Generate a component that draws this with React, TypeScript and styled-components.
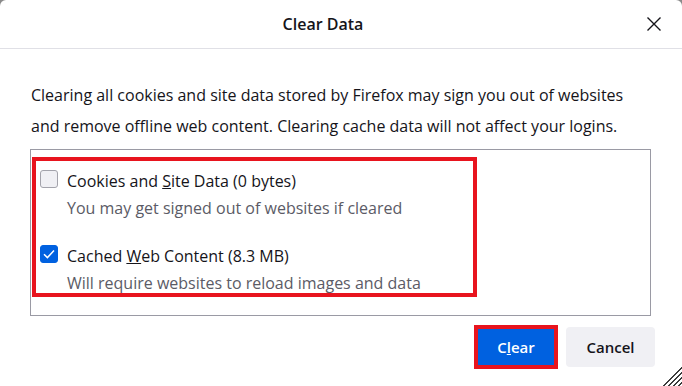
import { createGlobalStyle, styled } from 'styled-components';

const GlobalStyle = createGlobalStyle`
  html, body {
    margin: 0;
    padding: 0;
    background: #8a8a8a;
  }
  body {
    font-family: "Open Sans", "Noto Sans", sans-serif;
    color: #15141a;
  }
`;

function CloseIcon() {
  return (
    <svg width="16" height="16" viewBox="0 0 16 16" aria-hidden="true">
      <path d="M1.5 1.5 L14.5 14.5 M14.5 1.5 L1.5 14.5" stroke="#15141a" strokeWidth="1.4" fill="none" />
    </svg>
  );
}

function CheckMark() {
  return (
    <svg width="14" height="14" viewBox="0 0 14 14" aria-hidden="true">
      <path d="M2 7.2 L5.4 10.6 L12 3.6" stroke="#fff" strokeWidth="1.5" fill="none" />
    </svg>
  );
}

const items = [
  {
    checked: false,
    label: (
      <>
        Cookies and <u>S</u>ite Data (0 bytes)
      </>
    ),
    desc: 'You may get signed out of websites if cleared',
  },
  {
    checked: true,
    label: (
      <>
        Cached <u>W</u>eb Content (8.3 MB)
      </>
    ),
    desc: 'Will require websites to reload images and data',
  },
];

function App() {
  return (
    <>
      <GlobalStyle />
      <Dialog>
        <Header>
          <Title>Clear Data</Title>
          <CloseButton aria-label="Close">
            <CloseIcon />
          </CloseButton>
        </Header>

        <Body>
          <Intro>
            Clearing all cookies and site data stored by Firefox may sign you out of websites
            <br />
            and remove offline web content. Clearing cache data will not affect your logins.
          </Intro>

          <ListBox>
            <Highlight>
              {items.map((item, i) => (
                <Item key={i} $first={i === 0}>
                  <Row>
                    <Box $checked={item.checked}>{item.checked && <CheckMark />}</Box>
                    <Label>{item.label}</Label>
                  </Row>
                  <Desc>{item.desc}</Desc>
                </Item>
              ))}
            </Highlight>
          </ListBox>
        </Body>

        <Footer>
          <Button $primary>
            C<u>l</u>ear
          </Button>
          <Button>Cancel</Button>
        </Footer>

        <ResizeGrip aria-hidden="true" />
      </Dialog>
    </>
  );
}

export default App;

const Dialog = styled.div`
  position: relative;
  width: 682px;
  height: 386px;
  background: #fff;
  border-radius: 6px 6px 0 0;
  display: flex;
  flex-direction: column;
`;

const Header = styled.header`
  display: flex;
  align-items: center;
  height: 48px;
  padding: 0 10px;
  border-bottom: 1px solid #e0e0e6;
`;

const Title = styled.h1`
  flex: 1;
  margin: 0;
  text-align: center;
  font-size: 16px;
  font-weight: 600;
`;

const CloseButton = styled.button`
  display: flex;
  align-items: center;
  justify-content: center;
  width: 36px;
  height: 36px;
  padding: 0;
  border: none;
  background: transparent;
`;

const Body = styled.div`
  padding: 0 31px 0 30px;
`;

const Intro = styled.p`
  margin: 31px 0 7px 1px;
  font-size: 16px;
  line-height: 31px;
`;

const ListBox = styled.div`
  box-sizing: border-box;
  height: 167px;
  border: 1px solid #9a9aa4;
  padding: 7px 0 0 1px;
`;

const Highlight = styled.div`
  box-sizing: border-box;
  width: 445px;
  height: 140px;
  border: 4px solid #e8141e;
  padding: 6px 0 0 4px;
`;

const Item = styled.div<{ $first?: boolean }>`
  display: flex;
  flex-direction: column;
  margin-top: ${(p) => (p.$first ? '0' : '24px')};
`;

const Row = styled.div`
  display: flex;
  align-items: center;
  gap: 9px;
  height: 24px;
`;

const Box = styled.span<{ $checked?: boolean }>`
  box-sizing: border-box;
  display: flex;
  align-items: center;
  justify-content: center;
  width: 18px;
  height: 18px;
  border-radius: 3px;
  background: ${(p) => (p.$checked ? '#0061e0' : '#f0f0f4')};
  border: 1px solid ${(p) => (p.$checked ? '#0061e0' : '#a3a3ab')};
`;

const Label = styled.span`
  font-size: 16px;
  line-height: 24px;
  padding-top: 3px;
`;

const Desc = styled.span`
  margin: 7px 0 0 27px;
  font-size: 16px;
  line-height: 20px;
  color: #5b5b66;
`;

const Footer = styled.div`
  display: flex;
  justify-content: flex-end;
  gap: 10px;
  padding: 11px 27px 0 0;
`;

const Button = styled.button<{ $primary?: boolean }>`
  height: 40px;
  min-width: ${(p) => (p.$primary ? '80px' : '89px')};
  border: none;
  border-radius: ${(p) => (p.$primary ? '0' : '4px')};
  font-family: "Open Sans", "Noto Sans", sans-serif;
  font-size: 15px;
  font-weight: 600;
  color: ${(p) => (p.$primary ? '#fff' : '#15141a')};
  background: ${(p) => (p.$primary ? '#0061e0' : '#f0f0f4')};
  outline: ${(p) => (p.$primary ? '4px solid #e8141e' : 'none')};
  outline-offset: -2px;
`;

// diagonal hatch in the corner, like the native resizer
const ResizeGrip = styled.div`
  position: absolute;
  right: 0;
  bottom: 0;
  z-index: 2;
  width: 20px;
  height: 20px;
  background: repeating-linear-gradient(
    -45deg,
    transparent 0 2px,
    #3c3c3c 2px 3.4px
  );
  clip-path: polygon(100% 0, 100% 100%, 0 100%);
`;
